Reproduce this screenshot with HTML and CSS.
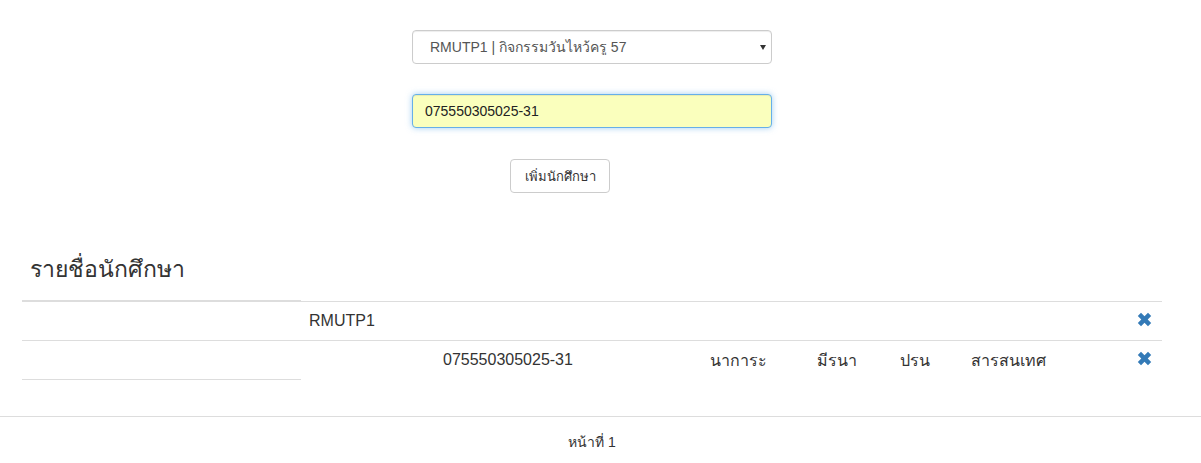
FILE: index.html
```html
<!DOCTYPE html>
<html lang="th">
<head>
    <meta charset="UTF-8">
    <meta name="viewport" content="width=device-width, initial-scale=1.0">
    <title>รายชื่อนักศึกษา</title>
    <link rel="stylesheet" href="styles.css">
</head>
<body>

<div class="page">
    <form class="add-form">
        <div class="select-wrap">
            <select class="form-control" id="activity">
                <option>RMUTP1 | กิจกรรมวันไหว้ครู 57</option>
            </select>
        </div>
        <input class="form-control student-id" type="text" value="075550305025-31">
        <div class="btn-row">
            <button type="button" class="btn">เพิ่มนักศึกษา</button>
        </div>
    </form>

    <h2 class="list-title">รายชื่อนักศึกษา</h2>

    <div class="list">
        <div class="side">
            <div class="side-row first"></div>
            <div class="side-row"></div>
        </div>
        <div class="table">
            <div class="row">
                <div class="cell span6">RMUTP1</div>
                <div class="cell icon"><svg width="15" height="15" viewBox="0 0 15 15"><path d="M0.8 4 4 0.8 7.5 4.3 11 0.8 14.2 4 10.7 7.5 14.2 11 11 14.2 7.5 10.7 4 14.2 0.8 11 4.3 7.5Z" fill="#337ab7"/></svg></div>
            </div>
            <div class="row">
                <div class="cell"></div>
                <div class="cell">075550305025-31</div>
                <div class="cell">นาการะ</div>
                <div class="cell">มีรนา</div>
                <div class="cell">ปรน</div>
                <div class="cell">สารสนเทศ</div>
                <div class="cell icon"><svg width="15" height="15" viewBox="0 0 15 15"><path d="M0.8 4 4 0.8 7.5 4.3 11 0.8 14.2 4 10.7 7.5 14.2 11 11 14.2 7.5 10.7 4 14.2 0.8 11 4.3 7.5Z" fill="#337ab7"/></svg></div>
            </div>
        </div>
    </div>
</div>

<footer>
    <div class="page-no">หน้าที่ 1</div>
</footer>

</body>
</html>
```

FILE: styles.css
```css
body {
    font-family: "Liberation Sans", "Noto Sans", "DejaVu Sans", sans-serif;
    font-size: 14px;
    color: #333;
    margin: 0;
    padding: 0;
    background: #fff;
}
.page {
    width: 1184px;
}
.add-form {
    width: 360px;
    margin-left: 412px;
    padding-top: 30px;
}
.form-control {
    display: block;
    box-sizing: border-box;
    width: 100%;
    height: 34px;
    padding: 6px 12px;
    font-family: inherit;
    font-size: 14px;
    color: #555;
    background: #fff;
    border: 1px solid #ccc;
    border-radius: 4px;
    box-shadow: inset 0 1px 1px rgba(0, 0, 0, .075);
}
.select-wrap {
    position: relative;
}
.select-wrap select {
    appearance: none;
    -webkit-appearance: none;
    padding-left: 17px;
}
.select-wrap::after {
    content: "";
    position: absolute;
    right: 6px;
    top: 15px;
    border-left: 3px solid transparent;
    border-right: 3px solid transparent;
    border-top: 5px solid #333;
}
.student-id {
    margin-top: 30px;
    color: #222;
    background: #faffbd;
    border-color: #66afe9;
    outline: 0;
    box-shadow: inset 0 1px 1px rgba(0, 0, 0, .075), 0 0 6px rgba(102, 175, 233, .6);
}
.btn-row {
    margin-top: 31px;
    padding-left: 98px;
}
.btn {
    width: 100px;
    height: 34px;
    padding: 6px 10px;
    font-family: inherit;
    font-size: 13px;
    color: #333;
    background: #fff;
    border: 1px solid #ccc;
    border-radius: 4px;
    cursor: pointer;
}
.list-title {
    font-size: 23px;
    font-weight: normal;
    margin: 61px 0 0 30px;
    line-height: 30px;
    height: 46px;
}
.list {
    display: flex;
    margin: 0 22px;
}
.side {
    width: 279px;
}
.side-row {
    height: 38px;
    border-bottom: 1px solid #ddd;
}
.side-row.first {
    border-top: 2px solid #ddd;
}
.table {
    flex: 1;
    margin-top: 1px;
}
.row {
    display: grid;
    grid-template-columns: 134px 267px 107px 83px 71px 167px 1fr;
    height: 38px;
    border-top: 1px solid #ddd;
    align-items: center;
}
.cell {
    padding: 0 8px;
    font-size: 16px;
    white-space: nowrap;
}
.span6 {
    grid-column: 1 / 7;
}
.icon {
    display: flex;
    align-items: center;
    padding: 0 0 0 7px;
    margin-top: -4px;
}
footer {
    margin-top: 36px;
    border-top: 1px solid #ddd;
}
.page-no {
    width: 1184px;
    text-align: center;
    padding-top: 14px;
    font-size: 14px;
    color: #333;
}
```
